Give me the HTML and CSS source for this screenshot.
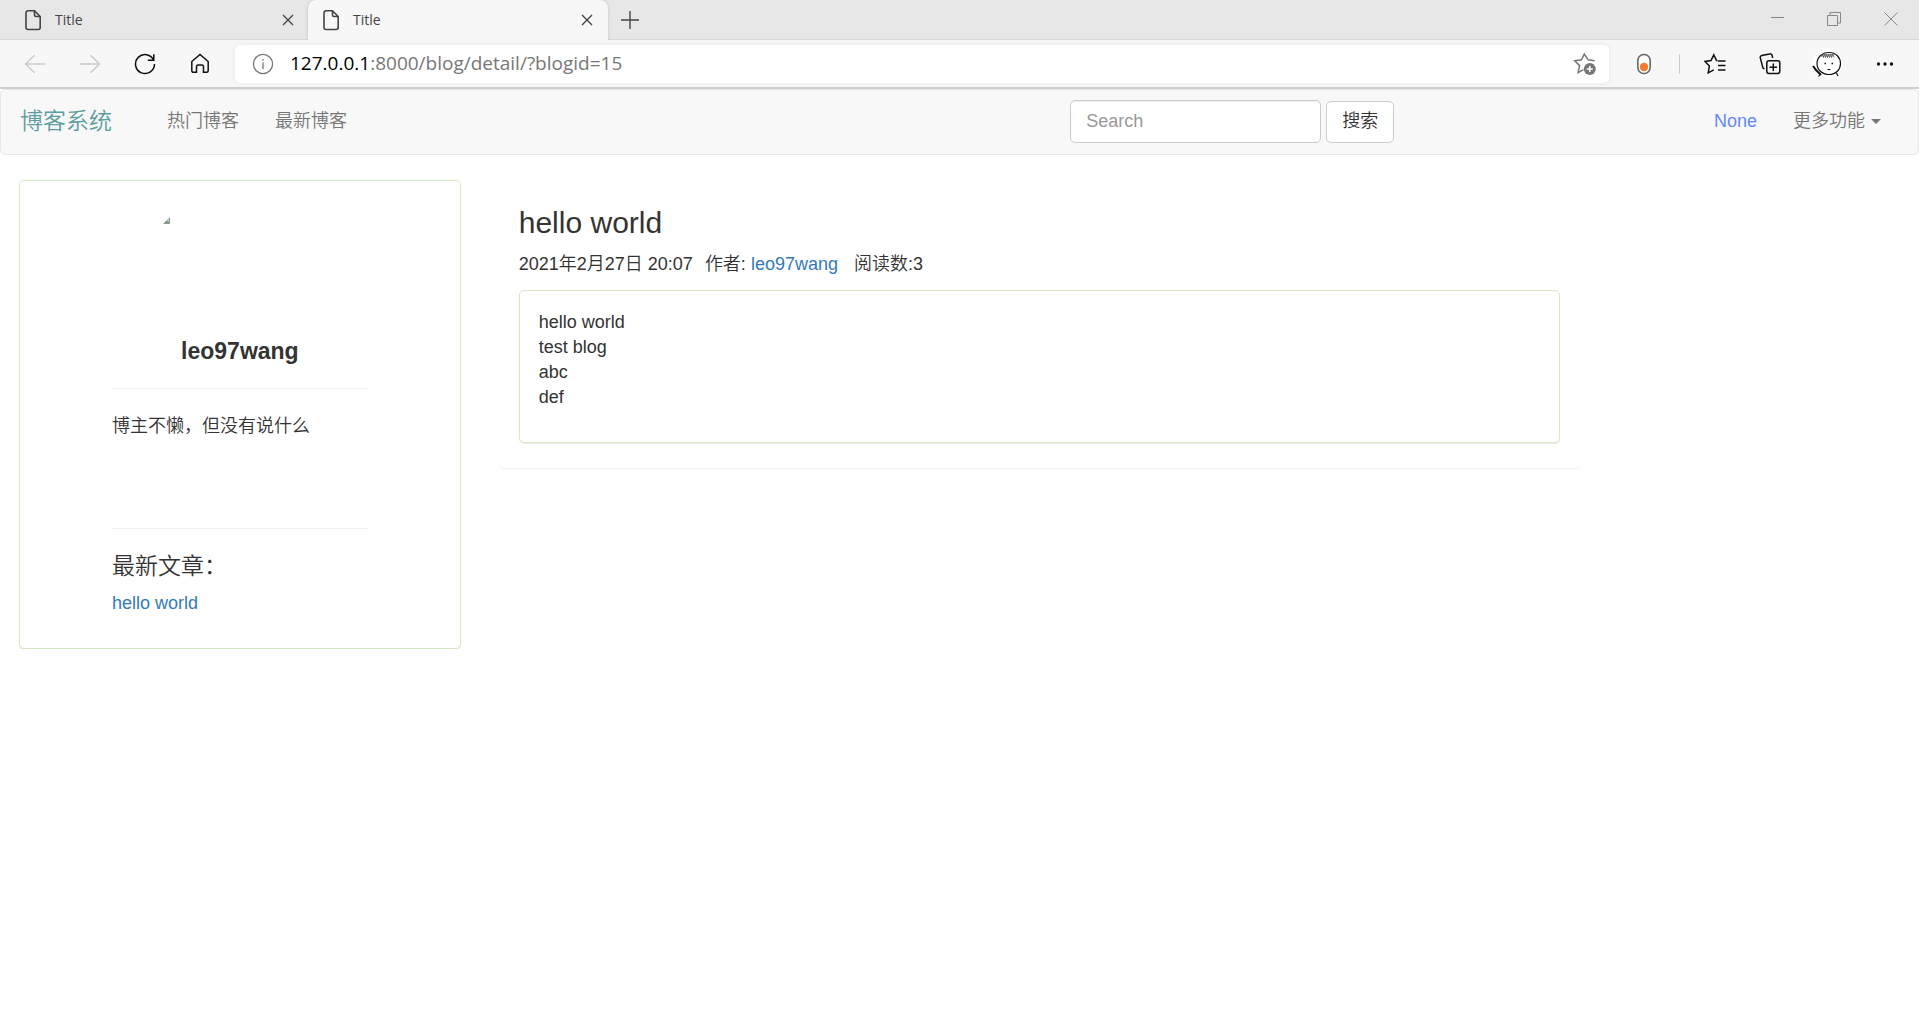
FILE: index.html
```html
<!DOCTYPE html>
<html lang="zh-CN">
<head>
<meta charset="utf-8">
<title>Title</title>
<link rel="stylesheet" href="styles.css">
</head>
<body>
<header class="browser">
  <div class="tabstrip">
    <div class="tab">
      <svg class="tab-icon" width="18" height="22" viewBox="0 0 18 22"><path d="M4 1.8h6.5l5.700 5.700v11a2 2 0 0 1-2 2H4a2 2 0 0 1-2-2v-14.700a2 2 0 0 1 2-2zM10.500 1.800v4.200a1.500 1.500 0 0 0 1.500 1.500h4.200"/></svg>
      <span class="tab-title">Title</span>
      <button class="tab-close" aria-label="关闭标签页"><svg width="12" height="12" viewBox="0 0 12 12"><path d="M1 1l10 10M11 1L1 11"/></svg></button>
    </div>
    <div class="tab tab-active">
      <svg class="tab-icon" width="18" height="22" viewBox="0 0 18 22"><path d="M4 1.800h6.500l5.700 5.700v11a2 2 0 0 1-2 2H4a2 2 0 0 1-2-2v-14.700a2 2 0 0 1 2-2zM10.500 1.800v4.200a1.500 1.500 0 0 0 1.500 1.500h4.200"/></svg>
      <span class="tab-title">Title</span>
      <button class="tab-close" aria-label="关闭标签页"><svg width="12" height="12" viewBox="0 0 12 12"><path d="M1 1l10 10M11 1L1 11"/></svg></button>
    </div>
    <button class="tab-new" aria-label="新建标签页"><svg width="18" height="18" viewBox="0 0 18 18"><path d="M9 0v18M0 9h18"/></svg></button>
    <div class="window-controls">
      <button aria-label="最小化"><svg width="14" height="14" viewBox="0 0 14 14"><path d="M1 5.500h13"/></svg></button>
      <button aria-label="还原"><svg width="14" height="14" viewBox="0 0 14 14"><path d="M.5 3.500h10v10H.5zM3 3.500v-3h10.500v10.500h-3"/></svg></button>
      <button aria-label="关闭"><svg width="14" height="14" viewBox="0 0 14 14"><path d="M.5.5l13 13M13.500.5l-13 13"/></svg></button>
    </div>
  </div>
  <div class="toolbar">
    <button class="tool tool-off" aria-label="后退"><svg width="22" height="20" viewBox="0 0 22 20"><path d="M21 10H1.500M10.500 1.200L1.500 10l9 8.800"/></svg></button>
    <button class="tool tool-off" aria-label="前进"><svg width="22" height="20" viewBox="0 0 22 20"><path d="M1 10h19.500M11.500 1.200l9 8.800-9 8.800"/></svg></button>
    <button class="tool" aria-label="刷新"><svg width="22" height="22" viewBox="0 0 22 22"><path d="M19.700 7.200A9.500 9.500 0 1 0 20.500 11M19.800 1.200v6h-6"/></svg></button>
    <button class="tool" aria-label="主页"><svg width="20" height="22" viewBox="0 0 20 22"><path d="M1.800 8.500L10 1.500l8.200 7v9.300a1.500 1.500 0 0 1-1.500 1.500h-3.200v-5.800a1.500 1.500 0 0 0-1.500-1.500H8a1.500 1.500 0 0 0-1.500 1.500v5.800H3.300a1.500 1.500 0 0 1-1.500-1.500z"/></svg></button>
    <div class="address">
      <svg class="info" width="22" height="22" viewBox="0 0 22 22"><circle cx="11" cy="11" r="9.600"/><path d="M11 9.500v6.500M11 6v1.600"/></svg>
      <span class="url"><b>127.0.0.1</b>:8000/blog/detail/?blogid=15</span>
      <button class="star" aria-label="收藏"><svg width="24" height="24" viewBox="0 0 24 24"><path d="M21.500 8.700l-6.300-.9L11.300 2 8.500 7.800l-6.800 1 4.900 4.800-1.500 7 5.400-2.900"/><circle class="dot" cx="16.800" cy="17" r="6"/><path class="plus" d="M16.800 14v6M13.800 17h6"/></svg></button>
    </div>
    <button class="tool tool-ext" aria-label="扩展"><svg width="16" height="22" viewBox="0 0 16 22"><rect x="1.800" y="1.500" width="12.400" height="19" rx="6" fill="#fff" stroke="#666" stroke-width="1.600"/><circle cx="8" cy="14" r="4.200" fill="#f47b2b" stroke="none"/></svg></button>
    <span class="divider"></span>
    <button class="tool" aria-label="收藏夹"><svg width="22" height="22" viewBox="0 0 22 22"><path d="M13.500 7.500h-1L9.800 1.800 7 7.500l-6 .9 4.400 4.600-1.200 6.800 5.600-3M9.800 1.800l2.700 5.700M14 8h7.500M14 12.500h7.500M14 17h7.500"/></svg></button>
    <button class="tool" aria-label="集锦"><svg width="22" height="22" viewBox="0 0 22 22"><rect x="7.800" y="7.800" width="13" height="12.700" rx="2.200"/><path d="M14.300 10.500v7.500M10.500 14.200h7.500M5.500 15.800a2 2 0 0 1-1.800-1.700L1.300 4.900a2 2 0 0 1 1.400-2.400L10.600.9a2 2 0 0 1 2.500 1.600l.6 2.500"/></svg></button>
    <button class="tool tool-profile" aria-label="个人资料"><svg width="30" height="30" viewBox="0 0 30 30"><circle cx="15" cy="15" r="15" fill="#fff" stroke="none"/><path d="M17 3.500c7 0 11.500 5 11.500 11S24 25.500 17 25.500 5 20.500 5 14.500 10 3.500 17 3.500zM8.500 25l-2 2.500M24.500 24l1.500 3M15.500 20.500h3"/><path d="M1 17l3 4 5 5" stroke-width="2"/><path d="M9.500 8l1.500-2.500.5 3L13 5l.5 3.500L15 5l.5 3.500L17 5l.5 3.500L19 5l.5 3.500L21 5l1 3.500" stroke-width=".6"/><path d="M12.500 14.500h1.500M19.500 14.500h1.500" stroke-width="1.600"/></svg></button>
    <button class="tool" aria-label="设置及其他"><svg width="18" height="6" viewBox="0 0 18 6"><g fill="#111" stroke="none"><circle cx="2.500" cy="3" r="1.700"/><circle cx="9" cy="3" r="1.700"/><circle cx="15.500" cy="3" r="1.700"/></g></svg></button>
  </div>
</header>

<nav class="navbar">
  <div class="nav-left">
    <a class="brand" href="#">博客系统</a>
    <a class="nav-link" href="#">热门博客</a>
    <a class="nav-link" href="#">最新博客</a>
  </div>
  <form class="search">
    <input type="text" placeholder="Search" aria-label="Search">
    <button type="button">搜索</button>
  </form>
  <div class="nav-right">
    <a class="nav-link nav-user" href="#">None</a>
    <a class="nav-link" href="#">更多功能<span class="caret"></span></a>
  </div>
</nav>

<main class="row">
  <aside class="side">
    <section class="panel author">
      <div class="avatar"><svg width="7" height="7" viewBox="0 0 7 7"><path d="M7 0v7H0z" fill="#999" stroke="none"/><path d="M6 2v2.500L4 4z" fill="#c3d3ee" stroke="none"/><path d="M1.500 6l2-2 1.500 2z" fill="#5aa64a" stroke="none"/></svg></div>
      <h4 class="author-name">leo97wang</h4>
      <hr>
      <p class="bio">博主不懒，但没有说什么</p>
      <hr>
      <h4 class="latest">最新文章：</h4>
      <a href="#">hello world</a>
    </section>
  </aside>
  <div class="content">
    <article class="post">
      <h3>hello world</h3>
      <div class="meta">
        <span>2021年2月27日 20:07</span>
        <span class="by">作者: <a href="#">leo97wang</a></span>
        <span>阅读数:3</span>
      </div>
      <div class="panel post-body">hello world<br>test blog<br>abc<br>def</div>
    </article>
  </div>
</main>
</body>
</html>
```
FILE: styles.css
```css
* { box-sizing: border-box; }

body {
  margin: 0;
  background: #fff;
  color: #333;
  font: 350 18px/25px "Liberation Sans", "Noto Sans CJK SC", sans-serif;
}

a { color: #337ab7; text-decoration: none; }
button { font: inherit; color: inherit; cursor: pointer; }
svg { display: block; fill: none; stroke: currentColor; }

/* Browser window */
.browser {
  border-bottom: 2px solid #cfcfcf;
  background: #f7f7f7;
  font-family: "Open Sans", "Noto Sans", sans-serif;
  font-weight: 400;
}
.browser button {
  display: flex;
  align-items: center;
  justify-content: center;
  padding: 0;
  border: 0;
  background: none;
}
.tabstrip {
  display: flex;
  height: 40px;
  background: #e7e7e7;
  box-shadow: inset 0 -1px #d6d6d6;
  color: #444;
}
.tab {
  display: flex;
  align-items: center;
  width: 308px;
  padding: 0 14px 0 24px;
  font-size: 14px;
}
.tab-active {
  width: 300px;
  padding: 0 15px 0 14px;
  border-radius: 8px 8px 0 0;
  background: #f7f7f7;
  box-shadow: 0 0 3px #bbb;
  clip-path: inset(0 -4px 0 -4px);
}
.tab-icon { stroke-width: 1.600; }
.tab-title { flex: 1; margin-left: 13px; padding-bottom: 2px; }
.tab-close { width: 12px; height: 20px; }
.tab-new { width: 44px; }
.tab-close svg, .tab-new svg { stroke-width: 1.400; }
.window-controls {
  display: flex;
  margin-left: auto;
  padding-bottom: 3px;
  color: #888;
}
.window-controls button { width: 57px; }

.toolbar {
  display: flex;
  align-items: center;
  height: 47px;
  padding: 0 7px;
  color: #111;
}
.tool { flex: none; width: 55px; height: 38px; }
.tool svg { stroke-width: 1.500; }
.tool-off { color: #ccc; }
.tool-ext { width: 70px; }
.tool-profile { width: 60px; }
.tool-profile svg { stroke-width: 1.200; }
.address {
  display: flex;
  flex: 1;
  align-items: center;
  height: 38px;
  margin-left: 8px;
  padding: 0 12px 0 17px;
  border-radius: 5px;
  background: #fff;
  box-shadow: 0 0 4px #e4e4e4;
}
.info { color: #777; stroke-width: 1.300; }
.url { flex: 1; margin-left: 16px; color: #777; font-size: 19px; }
.url b { color: #000; font-weight: 400; }
.star { color: #777; }
.star svg { stroke-width: 1.500; }
.star .dot { fill: #777; stroke: none; }
.star .plus { stroke: #fff; }
.divider { width: 1px; height: 20px; margin-right: 7px; background: #ccc; }

/* Site navigation */
.navbar {
  display: flex;
  align-items: center;
  height: 66px;
  padding-bottom: 2px;
  border: 1px solid #e7e7e7;
  border-radius: 5px;
  background: #f8f8f8;
}
.nav-left { display: flex; flex: 0 0 55%; align-items: center; padding-left: 19px; }
.brand { margin-right: 37px; color: #5f9ea0; font-size: 23px; }
.nav-link { padding: 0 18px; color: #777; }
.nav-user { color: #6488ff; }
.nav-right { display: flex; margin-left: auto; padding-right: 19px; }
.caret {
  display: inline-block;
  margin-left: 6px;
  border: 5px solid transparent;
  border-top-color: #777;
  border-bottom: 0;
  vertical-align: middle;
}
.search { display: flex; gap: 5px; align-items: flex-end; margin-left: 15px; }
.search input {
  width: 251px;
  height: 43px;
  padding: 0 15px;
  border: 1px solid #ccc;
  border-radius: 5px;
  background: #fff;
  box-shadow: inset 0 1px 1px #eee;
  color: #555;
  font: inherit;
}
.search input::placeholder { color: #999; opacity: 1; }
.search button {
  height: 42px;
  padding: 0 15px;
  border: 1px solid #ccc;
  border-radius: 5px;
  background: #fff;
}

/* Page grid */
.row { display: flex; align-items: flex-start; padding-top: 25px; }
.side { flex: 0 0 25%; padding: 0 19px; }
.content { flex: 0 0 58.333%; padding: 0 19px; }
.panel {
  border: 1px solid #d6e9c6;
  border-radius: 5px;
  background: #fff;
  box-shadow: 0 1px 1px #eee;
}

.author { padding: 36px 92px 32px; }
.avatar { height: 114px; padding-left: 51px; }
h3, h4 { margin: 0; font-weight: 350; }
h4 { font-size: 23px; }
.author-name { margin: 8px 0 24px; font-weight: 700; text-align: center; }
hr { margin: 0; border: 0; border-top: 1px solid #eee; }
.bio { min-height: 114px; margin: 25px 0 0; }
.latest { margin: 25px 0 12px; }

.post {
  padding: 25px 20px;
  border-radius: 5px;
  box-shadow: 0 1px 1px #eee;
}
h3 { font-size: 30px; line-height: 35px; }
.meta { display: flex; gap: 12px; margin: 12px 0 13px; }
.meta .by { margin-right: 4px; }
.post-body { padding: 19px 19px 32px; }
```
